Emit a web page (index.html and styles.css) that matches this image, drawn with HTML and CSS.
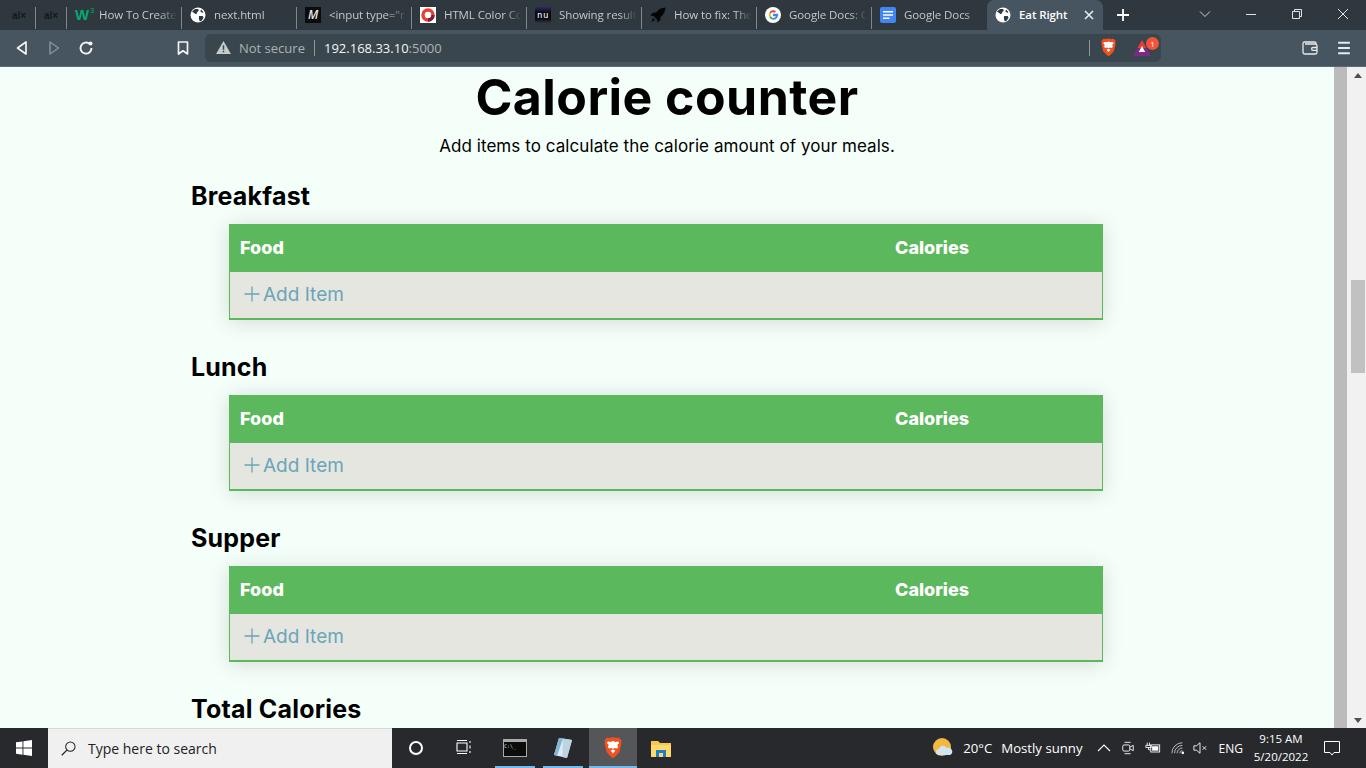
FILE: index.html
```html
<!DOCTYPE html>
<html lang="en">
<head>
<meta charset="utf-8">
<title>Eat Right</title>
<link rel="stylesheet" href="styles.css">
</head>
<body>
<svg class="defs" width="0" height="0" aria-hidden="true">
  <defs>
    <symbol id="globe" viewBox="0 0 16 16">
      <circle cx="8" cy="8" r="7.5" fill="#fff"/>
      <path d="M2 4.5l3-2.600 3.200.2.6 1.600-1.600 1.200-.2 1.500-1.600.6-1.600-1.300zM9 9h3.600l1 1.600-1.700 3-2 .9-1-2.600zM11 2.600l2.600 2.600-1.600.5-1.600-1.200z" fill="#2e383f"/>
    </symbol>
    <symbol id="brave" viewBox="0 0 20 22">
      <path d="M10 0l3.400 1 2.600-.4 2.600 3-.7 1.300.6 1.400-2.200 9-3.600 3.900-2.700 2-2.700-2-3.600-3.900-2.200-9 .6-1.400-.7-1.300 2.600-3 2.600.4z" fill="#f1511f"/>
      <path d="M10 4l2.600.9 2.400-.3 1.200 1.400-1.900 2.100.9 2-1.500 1.400-2.100-.5-1.600.9-1.600-.9-2.100.5-1.500-1.400.9-2L3.800 6l1.200-1.400 2.400.3z" fill="#fff"/>
      <path d="M7.600 13.600L10 12.500l2.400 1.100L10 16.400z" fill="#fff"/>
    </symbol>
  </defs>
</svg>

<header class="tabstrip">
  <div class="tab tab-mini"><span class="alx">al×</span></div>
  <div class="tab tab-tiny"><span class="alx">al×</span></div>
  <div class="tab">
    <span class="fav w3"><b>W</b><i>3</i></span><span class="title">How To Create</span>
  </div>
  <div class="tab">
    <svg class="fav" viewBox="0 0 16 16"><use href="#globe"/></svg><span class="title">next.html</span>
  </div>
  <div class="tab">
    <span class="fav medium">M</span><span class="title">&lt;input type="r</span>
  </div>
  <div class="tab">
    <span class="fav ring"><svg viewBox="0 0 16 16"><rect width="16" height="16" fill="#fff"/><circle cx="8" cy="8" r="5" fill="none" stroke="#e8402f" stroke-width="3.400"/><path d="M8 13a5 5 0 0 0 5-5" fill="none" stroke="#7b1f3a" stroke-width="3.400"/></svg></span><span class="title">HTML Color Co</span>
  </div>
  <div class="tab">
    <span class="fav nu">nu</span><span class="title">Showing result</span>
  </div>
  <div class="tab">
    <svg class="fav" viewBox="0 0 16 16"><path d="M15.500.5c-4 .2-7 1.800-9.500 5L2.500 6 .5 8.500l3 .6 3.500 3.400.6 3 2.500-2 .5-3.500C13.700 7.500 15.300 4.500 15.500.5zM3 11l2 2-3.500 2z" fill="#050505"/></svg><span class="title">How to fix: The</span>
  </div>
  <div class="tab">
    <svg class="fav" viewBox="0 0 16 16"><circle cx="8" cy="8" r="8" fill="#fff"/><path d="M8 6.800h5.200c.2 2.700-1 6-5.200 6v-1.900a3 3 0 0 0 3-1.700H8z" fill="#4285f4"/><path d="M4.500 5.400A4 4 0 0 1 8 3.200c1.200 0 2.200.5 3 1.200L9.600 5.800A2.300 2.300 0 0 0 5.800 7z" fill="#ea4335"/><path d="M4.500 5.400L5.800 7a3 3 0 0 0 0 2L4.500 10.600a5 5 0 0 1 0-5.200z" fill="#fbbc05"/><path d="M4.500 10.600L5.800 9A2.400 2.400 0 0 0 8 10.900v1.900a4.800 4.800 0 0 1-3.500-2.200z" fill="#34a853"/></svg><span class="title">Google Docs: C</span>
  </div>
  <div class="tab tab-last">
    <svg class="fav" viewBox="0 0 16 16"><rect width="16" height="16" rx="2" fill="#4285f4"/><path d="M3 4h10v1.600H3zM3 7.200h10v1.600H3zM3 10.400h6.500V12H3z" fill="#fff"/></svg><span class="title">Google Docs</span>
  </div>
  <div class="tab tab-active">
    <svg class="fav" viewBox="0 0 16 16"><use href="#globe"/></svg><span class="title">Eat Right</span>
    <svg class="tab-close" viewBox="0 0 10 10"><path d="M1 1l8 8M9 1l-8 8" stroke="#e8eaeb" stroke-width="1.600"/></svg>
  </div>
  <svg class="newtab" viewBox="0 0 12 12"><path d="M6 0v12M0 6h12" stroke="#fff" stroke-width="1.800"/></svg>
  <div class="winctl">
    <svg class="wc wc-chev" viewBox="0 0 12 12"><path d="M1 3.500l5 5 5-5" fill="none" stroke="#cfd3d5"/></svg>
    <svg class="wc" viewBox="0 0 12 12"><path d="M1 6.500h10" stroke="#e0e2e3"/></svg>
    <svg class="wc" viewBox="0 0 12 12"><path d="M1.500 3.500h7v7h-7zM3.500 3.500v-2h7v7h-2" fill="none" stroke="#e0e2e3"/></svg>
    <svg class="wc" viewBox="0 0 12 12"><path d="M1 1l10 10M11 1L1 11" stroke="#e0e2e3"/></svg>
  </div>
</header>

<nav class="toolbar">
  <svg class="tbtn" viewBox="0 0 16 16"><path d="M12 2v12L3.500 8z" fill="none" stroke="#f2f4f5" stroke-width="1.700" stroke-linejoin="round"/></svg>
  <svg class="tbtn" viewBox="0 0 16 16"><path d="M4 2v12L12.500 8z" fill="none" stroke="#86929a" stroke-width="1.500" stroke-linejoin="round"/></svg>
  <svg class="tbtn" viewBox="0 0 16 16"><path d="M13.500 8a5.500 5.500 0 1 1-1.700-3.900" fill="none" stroke="#f2f4f5" stroke-width="1.900"/><circle cx="12.500" cy="3.500" r="2" fill="#f2f4f5"/></svg>
  <svg class="tbtn tbtn-mark" viewBox="0 0 16 16"><path d="M3.500 2h9v12L8 10.800 3.500 14z" fill="none" stroke="#f2f4f5" stroke-width="1.700" stroke-linejoin="round"/></svg>
  <div class="omnibox">
    <svg class="warn" viewBox="0 0 16 14"><path d="M8 0l8 14H0z" fill="#c6cbce"/><path d="M7.200 4.500h1.600v5H7.200zM7.200 10.500h1.600V12H7.200z" fill="#3a464e"/></svg>
    <span class="insecure">Not secure</span>
    <span class="omni-div"></span>
    <span class="url">192.168.33.10<span class="port">:5000</span></span>
    <span class="omni-div omni-div-right"></span>
    <svg class="brave-ico" viewBox="0 0 20 22"><use href="#brave"/></svg>
    <span class="bat">
      <svg viewBox="0 0 18 16"><path d="M9 0l9 16H0z" fill="#7b2a86"/><path d="M9 0l4.500 8h-9z" fill="#e8402f"/><path d="M9 6l3.200 6H5.800z" fill="#fff"/></svg>
      <span class="badge">1</span>
    </span>
  </div>
  <svg class="tbtn tbtn-wallet" viewBox="0 0 16 14"><path d="M14 3V2.200C14 1.500 13.500 1 12.800 1H2.500C1.600 1 1 1.600 1 2.500v8.800c0 .9.700 1.700 1.600 1.700h10.800c.9 0 1.600-.7 1.600-1.700V4.500C15 3.600 14 3 13 3H3" fill="none" stroke="#e8eaeb" stroke-width="1.300"/><path d="M15 6.500h-4a1.300 1.300 0 0 0 0 2.800h4" fill="none" stroke="#e8eaeb" stroke-width="1.300"/></svg>
  <svg class="tbtn tbtn-menu" viewBox="0 0 12 12"><path d="M1 1.500h10M1 6h10M1 10.500h10" stroke="#e8eaeb" stroke-width="1.600"/></svg>
</nav>

<div class="viewport">
  <main class="page">
    <h1>Calorie counter</h1>
    <p class="lead">Add items to calculate the calorie amount of your meals.</p>

    <section class="meal">
      <h2>Breakfast</h2>
      <table class="foods">
        <thead><tr><th class="col-food">Food</th><th>Calories</th></tr></thead>
        <tbody><tr><td colspan="2"><span class="add"><svg viewBox="0 0 16 16"><path d="M8 .5v15M.5 8h15" stroke="currentColor" stroke-width="1.300"/></svg>Add Item</span></td></tr></tbody>
      </table>
    </section>

    <section class="meal">
      <h2>Lunch</h2>
      <table class="foods">
        <thead><tr><th class="col-food">Food</th><th>Calories</th></tr></thead>
        <tbody><tr><td colspan="2"><span class="add"><svg viewBox="0 0 16 16"><path d="M8 .5v15M.5 8h15" stroke="currentColor" stroke-width="1.300"/></svg>Add Item</span></td></tr></tbody>
      </table>
    </section>

    <section class="meal">
      <h2>Supper</h2>
      <table class="foods">
        <thead><tr><th class="col-food">Food</th><th>Calories</th></tr></thead>
        <tbody><tr><td colspan="2"><span class="add"><svg viewBox="0 0 16 16"><path d="M8 .5v15M.5 8h15" stroke="currentColor" stroke-width="1.300"/></svg>Add Item</span></td></tr></tbody>
      </table>
    </section>

    <section class="meal">
      <h2>Total Calories</h2>
    </section>
  </main>
  <div class="strip"></div>
  <div class="scrollbar">
    <svg class="sb-arrow" viewBox="0 0 8 5"><path d="M4 0l4 5H0z" fill="#505050"/></svg>
    <div class="sb-thumb"></div>
    <svg class="sb-arrow" viewBox="0 0 8 5"><path d="M4 5L0 0h8z" fill="#505050"/></svg>
  </div>
</div>

<footer class="taskbar">
  <div class="tb-slot tb-start">
    <svg class="winlogo" viewBox="0 0 16 16"><path d="M0 2.300l6.500-.9v6.200H0zM7.400 1.300L16 0v7.600H7.400zM0 8.500h6.500v6.200L0 13.800zM7.400 8.500H16V16l-8.600-1.200z" fill="#fff"/></svg>
  </div>
  <div class="searchbox">
    <svg class="lens" viewBox="0 0 16 16"><circle cx="10" cy="6" r="5" fill="none" stroke="#222" stroke-width="1.100"/><path d="M6.300 9.700L.8 15.200" stroke="#222" stroke-width="1.300"/></svg>
    <span>Type here to search</span>
  </div>
  <div class="tb-slot"><span class="cortana"></span></div>
  <div class="tb-slot">
    <svg class="taskview" viewBox="0 0 16 16"><path d="M1 3h10v8H1zM1 .5h10M1 13.500h10M14 1v2M14 5.500v3M14 11v2" fill="none" stroke="#fff" stroke-width="1.100"/></svg>
  </div>
  <div class="tb-app tb-running tb-cmd">
    <span class="cmd">C:\_</span>
  </div>
  <div class="tb-app tb-running tb-note">
    <svg class="app-ico" viewBox="0 0 20 22"><path d="M6 1l13 2-5 18-13-3z" fill="#dfe9ef"/><path d="M6 1l4 .6-6 17.100L1 18z" fill="#7fb7d6"/><path d="M10 1.600L19 3l-5 18-4.500-1z" fill="#bcd3e0"/></svg>
  </div>
  <div class="tb-app tb-running tb-active">
    <svg class="app-ico" viewBox="0 0 20 22"><use href="#brave"/></svg>
  </div>
  <div class="tb-app">
    <svg class="app-ico" viewBox="0 0 20 20"><path d="M0 3h7l2 2h11v14H0z" fill="#f6c84c"/><path d="M0 7h20v12H0z" fill="#fbd96a"/><path d="M5 12h10v7H12v-4H8v4H5z" fill="#1c7fc7"/></svg>
  </div>
  <div class="tray">
    <svg class="weather" viewBox="0 0 20 20"><circle cx="9" cy="9" r="9" fill="#f4b73f"/><path d="M6 17a3 3 0 0 1 0-6 4 4 0 0 1 7.500-1 3.500 3.500 0 0 1 3.500 7z" fill="#cfe6f5"/></svg>
    <span class="temp">20°C</span>
    <span class="sky">Mostly sunny</span>
    <svg class="tray-i tray-chev" viewBox="0 0 14 8"><path d="M1 7l6-6 6 6" fill="none" stroke="#fff" stroke-width="1.100"/></svg>
    <svg class="tray-i" viewBox="0 0 14 16"><path d="M3 1.500h7M3 14.500h7" stroke="#fff"/><rect x="1" y="4.500" width="8" height="7" rx="1.500" fill="none" stroke="#fff"/><path d="M9 7l4-2v6l-4-2" fill="none" stroke="#fff"/></svg>
    <svg class="tray-i tray-batt" viewBox="0 0 18 12"><path d="M2.500 0v3M5 0v3M1 3h6v2.500H1zM4 5.500V8h2" fill="none" stroke="#fff"/><rect x="6.500" y="2.500" width="10" height="8" fill="none" stroke="#fff"/><rect x="8" y="4" width="7" height="5" fill="#fff"/></svg>
    <svg class="tray-i tray-wifi" viewBox="0 0 16 14"><path d="M1 13a12 12 0 0 1 12-12M4 13a9 9 0 0 1 9-9M7 13a6 6 0 0 1 6-6M10 13a3 3 0 0 1 3-3" fill="none" stroke="#cfd0d2"/><circle cx="13.500" cy="12.500" r="1.500" fill="#fff"/></svg>
    <svg class="tray-i tray-vol" viewBox="0 0 16 14"><path d="M1 4.500h3L8 1v12L4 9.500H1z" fill="none" stroke="#fff"/><path d="M11 5l4 4M15 5l-4 4" stroke="#fff"/></svg>
    <span class="lang">ENG</span>
    <span class="clock"><span>9:15 AM</span><span>5/20/2022</span></span>
    <svg class="notify" viewBox="0 0 16 15"><path d="M.5.500h15v11H10L8 14l-2-2.500H.5z" fill="none" stroke="#fff"/></svg>
  </div>
</footer>
</body>
</html>
```

FILE: styles.css
```css
* { box-sizing: border-box; }
html, body { margin: 0; height: 100%; }
body {
  width: 1366px;
  height: 768px;
  overflow: hidden;
  display: flex;
  flex-direction: column;
  font-family: "Open Sans", "Liberation Sans", sans-serif;
  background: #f5fffa;
}
.defs { position: absolute; }

/* Tab strip */
.tabstrip {
  height: 30px;
  flex: none;
  display: flex;
  align-items: stretch;
  background: #2e383e;
  color: #c3c9cc;
  font-size: 11.5px;
  letter-spacing: -0.1px;
}
.tab {
  width: 115px;
  flex: none;
  display: flex;
  align-items: center;
  padding-left: 8px;
  position: relative;
  overflow: hidden;
}
.tab::after {
  content: "";
  position: absolute;
  right: 0;
  top: 7px;
  bottom: 1px;
  width: 1px;
  background: #7e878c;
}
.tab-mini { width: 36px; padding-left: 12px; }
.tab-tiny { width: 31px; padding-left: 8px; }
.tab-last::after { display: none; }
.tab-active {
  width: 116px;
  background: #46555f;
  border-radius: 7px 7px 0 0;
  color: #fff;
  font-weight: 600;
}
.tab-active::after { display: none; }
.fav {
  width: 16px;
  height: 16px;
  flex: none;
  margin-right: 8px;
  display: flex;
}
.fav svg { width: 16px; height: 16px; }
.title {
  white-space: nowrap;
  overflow: hidden;
  flex: 1;
  margin-right: 5px;
  padding-bottom: 2px;
  -webkit-mask-image: linear-gradient(90deg, #000 78%, transparent 100%);
  mask-image: linear-gradient(90deg, #000 78%, transparent 100%);
}
.tab-active .title { -webkit-mask-image: none; mask-image: none; }
.alx {
  font-family: "Liberation Sans", sans-serif;
  font-size: 10px;
  font-weight: 700;
  color: #11181c;
}
.w3 { color: #04aa6d; position: relative; font-family: "Liberation Sans", sans-serif; align-items: center; }
.w3 b { font-size: 15px; line-height: 16px; }
.w3 i { position: absolute; right: -3px; top: 0; font-size: 7px; line-height: 8px; font-style: normal; }
.medium {
  background: #0c0c0c;
  color: #e6e6e6;
  justify-content: center;
  align-items: center;
  font-size: 12px;
  font-style: italic;
  font-weight: 600;
  line-height: 16px;
}
.nu {
  background: linear-gradient(#2e2a5e, #0a0a14 35%, #0a0a14 75%, #2e383e);
  color: #fff;
  justify-content: center;
  align-items: center;
  font-family: "DejaVu Sans Mono", monospace;
  font-size: 9px;
  letter-spacing: 0.5px;
  line-height: 16px;
}
.tab-close { width: 10px; height: 10px; flex: none; margin-right: 9px; }
.newtab { width: 12px; height: 12px; margin: 9px 0 0 14px; flex: none; }
.winctl {
  margin-left: auto;
  display: flex;
  align-items: center;
  height: 28px;
}
.wc { width: 12px; height: 12px; margin-left: 34px; flex: none; }
.wc:last-child { margin-right: 17px; }

/* Toolbar */
.toolbar {
  height: 37px;
  flex: none;
  display: flex;
  align-items: center;
  background: #46555f;
  padding-left: 6px;
  padding-bottom: 1px;
  border-bottom: 1px solid #5d6b74;
}
.tbtn {
  width: 32px;
  height: 16px;
  flex: none;
}
.tbtn-mark { margin-left: 65px; }
.omnibox {
  width: 956px;
  height: 28px;
  margin-left: 6px;
  border-radius: 6px;
  background: #3a464e;
  display: flex;
  align-items: center;
  padding-left: 11px;
  font-size: 13px;
  color: #aab2b7;
  flex: none;
}
.warn { width: 15px; height: 13px; flex: none; margin-right: 8px; }
.insecure { width: 67px; white-space: nowrap; }
.omni-div { width: 1px; height: 16px; background: #8c969c; margin: 0 9px 0 8px; flex: none; }
.url { color: #f4f5f6; }
.port { color: #aab2b7; }
.omni-div-right { margin: 0 10px 0 auto; }
.brave-ico { width: 17px; height: 19px; flex: none; }
.bat { position: relative; width: 18px; height: 16px; margin: 0 10px 0 16px; flex: none; }
.bat svg { width: 18px; height: 16px; display: block; }
.badge {
  position: absolute;
  top: -3px;
  right: -8px;
  width: 13px;
  height: 13px;
  border-radius: 50%;
  background: #f4533a;
  color: #fff;
  font-size: 8px;
  line-height: 13px;
  text-align: center;
}
.tbtn-wallet { margin-left: 140px; width: 18px; height: 14px; }
.tbtn-menu { margin-left: 18px; width: 14px; height: 14px; }

/* Viewport */
.viewport {
  height: 661px;
  flex: none;
  display: flex;
  overflow: hidden;
}
.page {
  width: 1334px;
  flex: none;
  background: #f5fffa;
  padding: 0 231px 0 191px;
  font-family: "Inter", "Liberation Sans", sans-serif;
  color: #000;
  overflow: hidden;
}
h1 {
  margin: 0 -40px 0 0;
  font-size: 50px;
  line-height: 60px;
  font-weight: 700;
  text-align: center;
  letter-spacing: 0.45px;
}
.lead {
  margin: 7px -40px 0 0;
  font-size: 17px;
  letter-spacing: 0.07px;
  line-height: 24px;
  text-align: center;
}
.meal { margin-top: 23px; }
.meal + .meal { margin-top: 32px; }
h2 {
  margin: 0 0 13px;
  font-size: 25px;
  letter-spacing: 0.2px;
  line-height: 30px;
  font-weight: 700;
}
.foods {
  width: 874px;
  margin-left: 38px;
  border-collapse: separate;
  border-spacing: 0;
  table-layout: fixed;
  box-shadow: 0 2px 20px rgba(0, 0, 0, 0.14);
  background: #e6e6e1;
}
.foods th {
  height: 48px;
  background: #5cb85c;
  color: #fff;
  font-size: 18px;
  font-weight: 800;
  text-align: left;
  padding: 0 0 2px 11px;
}
.col-food { width: 655px; }
.foods td {
  height: 48px;
  padding: 0 0 2px 14px;
  border: solid #5cb85c;
  border-width: 0 1px 2px;
}
.add {
  display: flex;
  align-items: center;
  color: #6aa5b8;
  font-size: 19px;
}
.add svg { width: 16px; height: 16px; margin-right: 3px; flex: none; }

/* Strip + scrollbar */
.strip { width: 13px; flex: none; background: #bbb; }
.scrollbar {
  width: 19px;
  flex: none;
  background: #f1f1f1;
  display: flex;
  flex-direction: column;
  align-items: center;
  position: relative;
}
.sb-arrow { width: 8px; height: 5px; margin: 6px 0 0 2px; flex: none; }
.sb-arrow:last-child { margin: auto 0 5px 2px; }
.sb-thumb {
  position: absolute;
  top: 213px;
  left: 4px;
  width: 14px;
  height: 93px;
  background: #c1c1c1;
}

/* Taskbar */
.taskbar {
  height: 40px;
  flex: none;
  display: flex;
  align-items: stretch;
  background: #28292d;
  color: #fff;
  font-size: 13.200px;
}
.tb-slot {
  width: 48px;
  flex: none;
  display: flex;
  align-items: center;
  justify-content: center;
}
.winlogo { width: 16px; height: 16px; }
.searchbox {
  width: 344px;
  flex: none;
  background: #f0f0f0;
  border-top: 1px solid #d4dad4;
  color: #222;
  display: flex;
  align-items: center;
  padding-left: 13px;
  font-size: 14px;
}
.lens { width: 15px; height: 15px; margin-right: 12px; flex: none; }
.cortana { width: 14px; height: 14px; border: 2px solid #fff; border-radius: 50%; }
.taskview { width: 16px; height: 16px; }
.tb-app {
  width: 48px;
  flex: none;
  display: flex;
  align-items: center;
  justify-content: center;
  position: relative;
}
.tb-cmd { margin-left: 7px; width: 40px; }
.tb-note { margin-left: 8px; width: 40px; margin-right: 6px; }
.tb-running::after {
  content: "";
  position: absolute;
  left: 0;
  right: 0;
  bottom: 0;
  height: 2px;
  background: #76b9ed;
}
.tb-active { background: #55565a; }
.cmd {
  width: 24px;
  height: 18px;
  background: #0c0c0c;
  border: 1px solid #aaa;
  border-top-width: 3px;
  font-family: "DejaVu Sans Mono", monospace;
  font-size: 5px;
  line-height: 8px;
  color: #ddd;
}
.app-ico { width: 20px; height: 22px; }
.tray {
  margin-left: auto;
  display: flex;
  align-items: center;
}
.weather { width: 20px; height: 20px; flex: none; margin-right: 10px; }
.temp { margin-right: 9px; }
.sky { margin-right: 14px; }
.tray-i { width: 14px; height: 14px; flex: none; margin-right: 10px; }
.tray-chev { height: 8px; }
.tray-batt { width: 16px; }
.tray-wifi { margin-right: 8px; }
.tray-vol { margin-right: 0; }
.lang { font-size: 12px; margin: 0 0 0 12px; }
.clock {
  display: flex;
  flex-direction: column;
  align-items: center;
  font-size: 11.500px;
  line-height: 18px;
  width: 76px;
  margin-right: 5px;
}
.notify { width: 16px; height: 15px; margin-right: 26px; flex: none; }
```
